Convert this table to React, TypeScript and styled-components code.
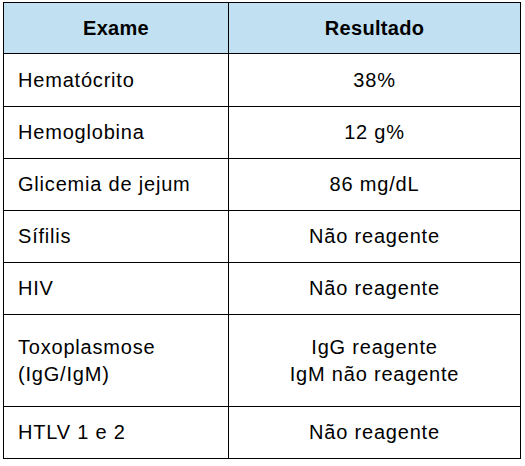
import React from "react";
import styled, { createGlobalStyle } from "styled-components";

const Global = createGlobalStyle`
  html, body { margin: 0; padding: 0; background: #ffffff; }
  body { font-family: "Liberation Sans", Arial, sans-serif; color: #000; }
`;

const Page = styled.div`
  padding: 2px 0 0 3px;
`;

const Table = styled.table`
  border-collapse: collapse;
  width: 518px;
  table-layout: fixed;
  font-family: "Liberation Sans", Arial, sans-serif;
  font-size: 20px;
  letter-spacing: 0.8px;
  color: #000;
`;

const HeadRow = styled.tr`
  height: 51px;
  background: #c1e1f2;
`;

const Row = styled.tr<{ $h: number }>`
  height: ${(p) => p.$h}px;
`;

const Th = styled.th<{ $w?: number }>`
  border: 1px solid #000;
  font-weight: bold;
  letter-spacing: 0.3px;
  text-align: center;
  vertical-align: middle;
  padding: 0;
  ${(p) => (p.$w ? `width: ${p.$w}px;` : "")}
`;

const Name = styled.td`
  border: 1px solid #000;
  text-align: left;
  vertical-align: middle;
  padding: 0 0 0 14px;
  line-height: 27px;
`;

const Value = styled.td`
  border: 1px solid #000;
  text-align: center;
  vertical-align: middle;
  padding: 0;
  line-height: 27px;
`;

const rows: { name: React.ReactNode; value: React.ReactNode; h: number }[] = [
  { name: "Hematócrito", value: "38%", h: 53 },
  { name: "Hemoglobina", value: "12 g%", h: 52 },
  { name: "Glicemia de jejum", value: "86 mg/dL", h: 52 },
  { name: "Sífilis", value: "Não reagente", h: 52 },
  { name: "HIV", value: "Não reagente", h: 52 },
  {
    name: (
      <>
        Toxoplasmose
        <br />
        (IgG/IgM)
      </>
    ),
    value: (
      <>
        IgG reagente
        <br />
        IgM não reagente
      </>
    ),
    h: 92,
  },
  { name: "HTLV 1 e 2", value: "Não reagente", h: 52 },
];

export default function App() {
  return (
    <>
      <Global />
      <Page>
        <Table>
          <thead>
            <HeadRow>
              <Th $w={224}>Exame</Th>
              <Th>Resultado</Th>
            </HeadRow>
          </thead>
          <tbody>
            {rows.map((r, i) => (
              <Row key={i} $h={r.h}>
                <Name>{r.name}</Name>
                <Value>{r.value}</Value>
              </Row>
            ))}
          </tbody>
        </Table>
      </Page>
    </>
  );
}
